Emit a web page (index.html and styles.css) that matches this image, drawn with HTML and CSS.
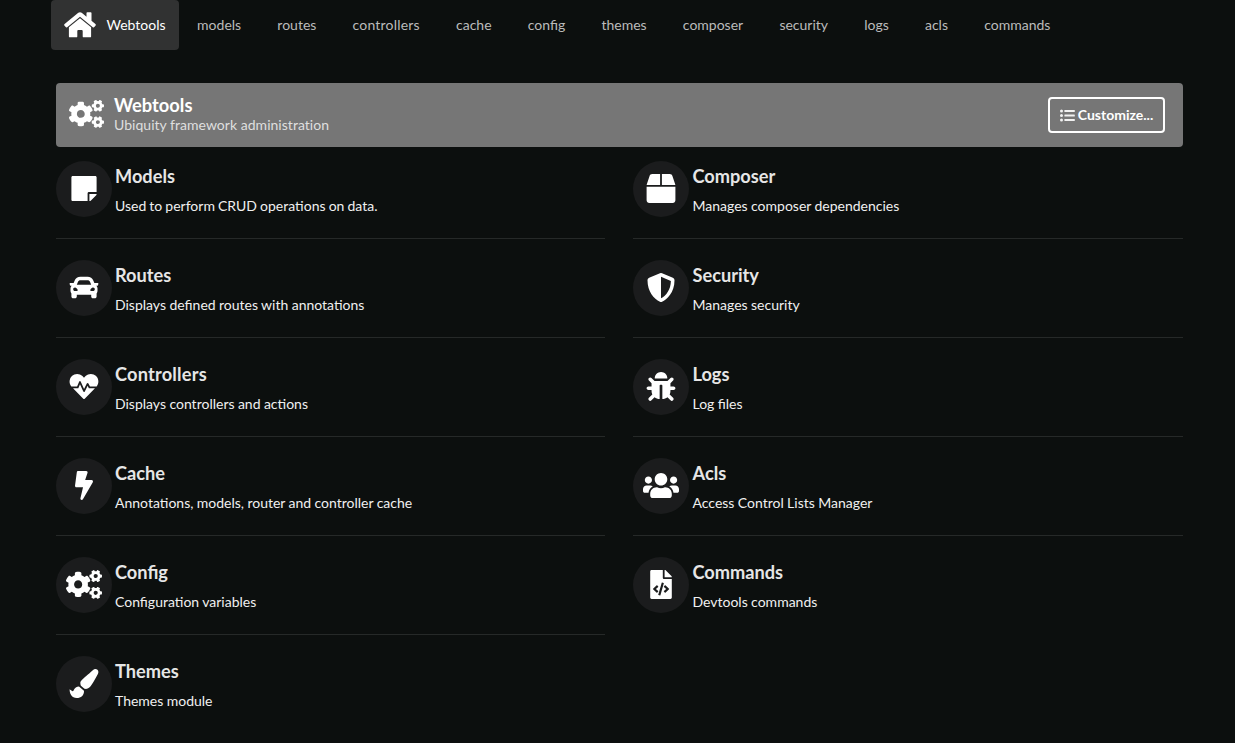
FILE: index.html
```html
<!DOCTYPE html>
<html lang="en">
<head>
<meta charset="utf-8">
<title>Webtools</title>
<link rel="stylesheet" href="styles.css">
</head>
<body>
<svg class="sprite" aria-hidden="true">
  <symbol id="cogs" viewBox="0 0 640 512">
    <path id="cog-small" d="M512.1 191l-8.2 14.3c-3 5.3-9.4 7.5-15.1 5.4-11.8-4.4-22.6-10.7-32.1-18.6-4.6-3.8-5.8-10.5-2.8-15.7l8.2-14.3c-6.9-8-12.3-17.3-15.9-27.4h-16.5c-6 0-11.2-4.3-12.2-10.3-2-12-2.1-24.6 0-37.1 1-6 6.2-10.4 12.2-10.4h16.5c3.6-10.1 9-19.4 15.9-27.4l-8.2-14.3c-3-5.2-1.9-11.9 2.8-15.7 9.5-7.9 20.4-14.2 32.1-18.6 5.7-2.1 12.1.1 15.1 5.4l8.2 14.3c10.5-1.9 21.2-1.9 31.7 0L552 6.3c3-5.3 9.4-7.5 15.1-5.4 11.8 4.4 22.6 10.7 32.1 18.6 4.6 3.8 5.8 10.5 2.8 15.7l-8.2 14.3c6.9 8 12.3 17.3 15.9 27.4h16.5c6 0 11.2 4.3 12.2 10.3 2 12 2.1 24.6 0 37.1-1 6-6.2 10.4-12.2 10.4h-16.5c-3.6 10.1-9 19.4-15.9 27.4l8.2 14.3c3 5.2 1.9 11.9-2.8 15.7-9.5 7.9-20.4 14.2-32.1 18.6-5.7 2.1-12.1-.1-15.1-5.4l-8.2-14.3c-10.4 1.9-21.2 1.9-31.7 0zm-10.5-58.8c38.5 29.6 82.4-14.3 52.8-52.8-38.5-29.7-82.4 14.3-52.8 52.8z"/>
    <use href="#cog-small" y="298.7"/>
    <path d="M386.3 286.1l33.7 16.8c10.1 5.8 14.5 18.1 10.5 29.1-8.9 24.2-26.4 46.4-42.6 65.8-7.4 8.9-20.2 11.1-30.3 5.3l-29.1-16.8c-16 13.7-34.6 24.6-54.9 31.7v33.6c0 11.6-8.3 21.6-19.7 23.6-24.6 4.2-50.4 4.4-75.9 0-11.5-2-20-11.9-20-23.6V418c-20.3-7.2-38.9-18-54.9-31.7L74 403c-10 5.8-22.9 3.6-30.3-5.3-16.2-19.4-33.3-41.6-42.2-65.7-4-10.9.4-23.2 10.5-29.1l33.3-16.8c-3.9-20.9-3.9-42.4 0-63.4L12 205.8c-10.1-5.8-14.6-18.1-10.5-29 8.9-24.2 26-46.4 42.2-65.8 7.4-8.9 20.2-11.1 30.3-5.3l29.1 16.8c16-13.7 34.6-24.6 54.9-31.7V57.1c0-11.5 8.2-21.5 19.6-23.5 24.6-4.2 50.5-4.4 76-.1 11.5 2 20 11.9 20 23.6v33.6c20.3 7.2 38.9 18 54.9 31.7l29.1-16.8c10-5.8 22.9-3.6 30.3 5.3 16.2 19.4 33.2 41.6 42.1 65.8 4 10.9.1 23.2-10 29.1l-33.7 16.8c3.9 21 3.9 42.5 0 63.5zm-117.6 21.1c59.2-77-28.7-164.9-105.7-105.7-59.2 77 28.7 164.9 105.7 105.7z"/>
  </symbol>
</svg>

<nav class="menu">
  <a class="item active">
    <svg class="home" viewBox="0 0 32 26" fill="currentColor"><path d="M16 0.2c-.6 0-1.2.2-1.7.6L.6 12.1c-.6.5-.6 1-.2 1.5l1.3 1.5c.4.5 1 .5 1.5.1L16 4.7l12.8 10.5c.5.4 1.1.4 1.5-.1l1.3-1.5c.4-.5.4-1-.2-1.5L27.5 8.800V1.100c0-.5-.3-.8-.8-.8h-3.400c-.5 0-.8.3-.8.8v3.600L17.700.8c-.5-.4-1.100-.6-1.700-.6z"/><path d="M16 6.200L4.900 15.300v9.100c0 .5.400.9.900.9h6.600c.5 0 .9-.4.9-.9v-5.500c0-.5.400-.9.900-.9h3.600c.5 0 .9.400.9.9v5.500c0 .5.400.9.900.9h6.600c.5 0 .9-.4.900-.9v-9.100z"/></svg>
    <span>Webtools</span>
  </a>
  <a class="item">models</a>
  <a class="item">routes</a>
  <a class="item wide">controllers</a>
  <a class="item">cache</a>
  <a class="item">config</a>
  <a class="item">themes</a>
  <a class="item">composer</a>
  <a class="item">security</a>
  <a class="item">logs</a>
  <a class="item">acls</a>
  <a class="item">commands</a>
</nav>

<main class="page">
  <header class="banner">
    <svg class="icon" viewBox="0 0 640 512"><use href="#cogs"/></svg>
    <div class="banner-text">
      <h1 class="banner-title">Webtools</h1>
      <p class="banner-sub">Ubiquity framework administration</p>
    </div>
    <button class="customize" type="button">
      <svg class="list-icon" viewBox="0 0 15 13" fill="currentColor"><circle cx="1.500" cy="2" r="1.500"/><circle cx="1.500" cy="6.500" r="1.500"/><circle cx="1.500" cy="11" r="1.500"/><rect x="4.400" y="1" width="10.400" height="2" rx=".5"/><rect x="4.400" y="5.500" width="10.400" height="2" rx=".5"/><rect x="4.400" y="10" width="10.400" height="2" rx=".5"/></svg>
      <span>Customize...</span>
    </button>
  </header>

  <div class="columns">
    <section class="list">
      <article class="entry">
        <div class="disc"><svg class="icon" viewBox="-96 0 640 512"><path d="M312 320h136V56c0-13.3-10.7-24-24-24H24C10.7 32 0 42.7 0 56v400c0 13.3 10.7 24 24 24h264V344c0-13.2 10.8-24 24-24zm129 55l-98 98c-4.5 4.5-10.6 7-17 7h-6V352h128v6.100c0 6.300-2.500 12.400-7 16.900z"/></svg></div>
        <div><h2 class="title">Models</h2><p class="desc tight">Used to perform CRUD operations on data.</p></div>
      </article>
      <article class="entry">
        <div class="disc"><svg class="icon" viewBox="-64 0 640 512"><path d="M499.99 176h-59.87l-16.64-41.6C406.38 91.63 365.57 64 319.5 64h-127c-46.06 0-86.88 27.63-103.99 70.4L71.87 176H12.01C4.2 176-1.53 183.34.37 190.91l6 24C7.7 220.25 12.5 224 18.01 224h20.07C24.65 235.73 16 252.78 16 272v48c0 16.12 6.16 30.67 16 41.93V416c0 17.67 14.33 32 32 32h32c17.67 0 32-14.33 32-32v-32h256v32c0 17.67 14.33 32 32 32h32c17.67 0 32-14.33 32-32v-54.07c9.84-11.25 16-25.8 16-41.93v-48c0-19.22-8.65-36.27-22.07-48H494c5.51 0 10.31-3.75 11.64-9.09l6-24c1.89-7.57-3.84-14.91-11.65-14.91zm-352.06-17.83c7.29-18.22 24.94-30.17 44.57-30.17h127c19.63 0 37.28 11.95 44.57 30.17L384 208H128l19.93-49.83zM96 319.8c-19.2 0-32-12.76-32-31.9S76.8 256 96 256s48 28.71 48 47.85-28.8 15.95-48 15.95zm320 0c-19.2 0-48 3.19-48-15.95S396.8 256 416 256s32 12.76 32 31.9-12.8 31.9-32 31.9z"/></svg></div>
        <div><h2 class="title">Routes</h2><p class="desc">Displays defined routes with annotations</p></div>
      </article>
      <article class="entry">
        <div class="disc"><svg class="icon" viewBox="-64 0 640 512"><path d="M320.2 243.8l-49.7 99.4c-6 12.1-23.4 11.7-28.9-.6l-56.9-126.3-30 71.7H60.6l182.5 186.5c7.1 7.3 18.6 7.3 25.7 0L451.4 288H342.3l-22.1-44.2zM473.7 73.9l-2.4-2.5c-51.5-52.6-135.8-52.6-187.4 0L256 100l-27.9-28.5c-51.5-52.7-135.9-52.7-187.4 0l-2.4 2.4C-10.4 123.7-12.5 203 31 256h102.4l35.9-86.2c5.4-12.9 23.6-13.2 29.4-.4l58.2 129.3 49-97.9c5.9-11.8 22.7-11.8 28.6 0l27.6 55.2H481c43.5-53 41.4-132.3-7.3-182.1z"/></svg></div>
        <div><h2 class="title wide">Controllers</h2><p class="desc">Displays controllers and actions</p></div>
      </article>
      <article class="entry">
        <div class="disc"><svg class="icon" viewBox="-160 0 640 512"><path d="M296 160H180.6l42.6-129.8C227.2 15 215.7 0 200 0H56C44 0 33.8 8.9 32.2 20.8l-32 240C-1.7 275.2 9.5 288 24 288h118.7L96.6 482.5c-3.6 15.2 8 29.5 23.3 29.5 8.4 0 16.4-4.4 20.8-12l176-304c9.3-15.9-2.2-36-20.7-36z"/></svg></div>
        <div><h2 class="title">Cache</h2><p class="desc">Annotations, models, router and controller cache</p></div>
      </article>
      <article class="entry">
        <div class="disc"><svg class="icon" viewBox="0 0 640 512"><use href="#cogs"/></svg></div>
        <div><h2 class="title">Config</h2><p class="desc">Configuration variables</p></div>
      </article>
      <article class="entry">
        <div class="disc"><svg class="icon" viewBox="-64 0 640 512"><path d="M167.02 309.34c-40.12 2.58-76.53 17.86-97.19 72.3-2.35 6.21-8 9.98-14.59 9.98-11.11 0-45.46-27.67-55.25-34.35C0 439.62 37.93 512 128 512c75.86 0 128-43.77 128-120.19 0-3.11-.65-6.08-.97-9.13l-88.01-73.34zM457.89 0c-15.16 0-29.37 6.71-40.21 16.45C213.27 199.05 192 203.34 192 257.09c0 13.7 3.25 26.76 8.73 38.7l63.82 53.18c7.21 1.8 14.64 3.03 22.39 3.03 62.11 0 98.11-45.47 211.16-256.46 7.38-14.35 13.9-29.85 13.9-45.99C512 20.64 486 0 457.89 0z"/></svg></div>
        <div><h2 class="title">Themes</h2><p class="desc">Themes module</p></div>
      </article>
    </section>

    <section class="list">
      <article class="entry">
        <div class="disc"><svg class="icon" viewBox="-64 0 640 512"><path d="M509.5 184.6L458.9 32.8C452.4 13.2 434.1 0 413.4 0H272v192h238.7c-.4-2.5-.4-5-1.2-7.4zM240 0H98.6c-20.7 0-39 13.2-45.5 32.8L2.5 184.6c-.8 2.4-.8 4.9-1.2 7.4H240V0zM0 224v240c0 26.5 21.5 48 48 48h416c26.5 0 48-21.5 48-48V224H0z"/></svg></div>
        <div><h2 class="title">Composer</h2><p class="desc">Manages composer dependencies</p></div>
      </article>
      <article class="entry">
        <div class="disc"><svg class="icon" viewBox="-64 0 640 512"><path d="M466.5 83.7l-192-80a48.15 48.15 0 0 0-36.9 0l-192 80C27.7 91.1 16 108.6 16 128c0 198.5 114.5 335.7 221.5 380.3 11.8 4.9 25.1 4.9 36.9 0C360.1 472.6 496 349.3 496 128c0-19.4-11.7-36.9-29.5-44.3zM256.1 446.3l-.1-381 175.9 73.3c-3.3 151.4-82.1 261.1-175.8 307.7z"/></svg></div>
        <div><h2 class="title">Security</h2><p class="desc">Manages security</p></div>
      </article>
      <article class="entry">
        <div class="disc"><svg class="icon" viewBox="-64 0 640 512"><path d="M511.988 288.9c-.478 17.43-15.217 31.1-32.653 31.1H424v16c0 21.864-4.882 42.584-13.6 61.145l60.228 60.228c12.496 12.497 12.496 32.758 0 45.255-12.498 12.497-32.759 12.496-45.256 0l-54.736-54.736C345.886 467.965 314.351 480 280 480V236c0-6.627-5.373-12-12-12h-24c-6.627 0-12 5.373-12 12v244c-34.351 0-65.886-12.035-90.636-32.108l-54.736 54.736c-12.498 12.497-32.759 12.496-45.256 0-12.496-12.497-12.496-32.758 0-45.255l60.228-60.228C92.882 378.584 88 357.864 88 336v-16H32.666C15.23 320 .491 306.33.013 288.9-.484 270.816 14.028 256 32 256h56v-58.745l-46.628-46.628c-12.496-12.497-12.496-32.758 0-45.255 12.498-12.497 32.758-12.497 45.256 0L141.255 160h229.489l54.627-54.627c12.498-12.497 32.758-12.497 45.256 0 12.496 12.497 12.496 32.758 0 45.255L424 197.255V256h56c17.972 0 32.484 14.816 31.988 32.9zM257 0c-61.856 0-112 50.144-112 112h224C369 50.144 318.856 0 257 0z"/></svg></div>
        <div><h2 class="title">Logs</h2><p class="desc">Log files</p></div>
      </article>
      <article class="entry">
        <div class="disc"><svg class="icon" viewBox="0 0 640 512"><path d="M96 224c35.3 0 64-28.7 64-64s-28.7-64-64-64-64 28.7-64 64 28.7 64 64 64zm448 0c35.3 0 64-28.7 64-64s-28.7-64-64-64-64 28.7-64 64 28.7 64 64 64zm32 32h-64c-17.6 0-33.5 7.1-45.1 18.6 40.3 22.1 68.9 62 75.1 109.4h66c17.7 0 32-14.3 32-32v-32c0-35.3-28.7-64-64-64zm-256 0c61.9 0 112-50.1 112-112S381.9 32 320 32 208 82.1 208 144s50.1 112 112 112zm76.8 32h-8.3c-20.8 10-43.9 16-68.5 16s-47.6-6-68.5-16h-8.3C179.6 288 128 339.6 128 403.2V432c0 26.5 21.5 48 48 48h288c26.5 0 48-21.5 48-48v-28.8c0-63.6-51.6-115.2-115.2-115.2zm-223.7-13.4C161.5 263.1 145.6 256 128 256H64c-35.3 0-64 28.7-64 64v32c0 17.7 14.3 32 32 32h65.9c6.3-47.4 34.9-87.3 75.2-109.4z"/></svg></div>
        <div><h2 class="title">Acls</h2><p class="desc">Access Control Lists Manager</p></div>
      </article>
      <article class="entry">
        <div class="disc"><svg class="icon" viewBox="-128 0 640 512"><path d="M384 121.941V128H256V0h6.059c6.365 0 12.47 2.529 16.971 7.029l97.941 97.941A24.005 24.005 0 0 1 384 121.941zM248 160c-13.2 0-24-10.8-24-24V0H24C10.745 0 0 10.745 0 24v464c0 13.255 10.745 24 24 24h336c13.255 0 24-10.745 24-24V160H248zM123.206 400.505a5.4 5.4 0 0 1-7.633.246l-64.866-60.812a5.4 5.4 0 0 1 0-7.879l64.866-60.812a5.4 5.4 0 0 1 7.633.246l19.579 20.885a5.4 5.4 0 0 1-.372 7.747L101.65 336l40.763 35.874a5.4 5.4 0 0 1 .372 7.747l-19.579 20.884zm51.295 50.479l-27.453-7.97a5.402 5.402 0 0 1-3.681-6.692l61.44-211.626a5.402 5.402 0 0 1 6.692-3.681l27.452 7.97a5.4 5.4 0 0 1 3.68 6.692l-61.44 211.626a5.397 5.397 0 0 1-6.69 3.681zm160.792-111.045l-64.866 60.812a5.4 5.4 0 0 1-7.633-.246l-19.58-20.885a5.4 5.4 0 0 1 .372-7.747L284.35 336l-40.763-35.874a5.4 5.4 0 0 1-.372-7.747l19.58-20.885a5.4 5.4 0 0 1 7.633-.246l64.866 60.812a5.4 5.4 0 0 1-.001 7.879z"/></svg></div>
        <div><h2 class="title">Commands</h2><p class="desc">Devtools commands</p></div>
      </article>
    </section>
  </div>
</main>
</body>
</html>
```
FILE: styles.css
```css
* { box-sizing: border-box; }

body {
  margin: 0;
  height: 743px;
  overflow: hidden;
  background: #0c0f0e;
  color: #fff;
  font: 14px/20px Lato, "Liberation Sans", sans-serif;
}

h1, h2, p { margin: 0; }

.sprite { display: none; }

.menu {
  display: flex;
  height: 50px;
  padding-left: 51px;
}

.item {
  display: flex;
  align-items: center;
  padding: 0 18.1px;
  color: #bbb;
}

.item.wide { letter-spacing: .2px; }

.item.active {
  width: 128px;
  padding: 0 0 0 13px;
  gap: 10.5px;
  border-radius: 4px;
  background: #313232;
  color: #fff;
}

.home { width: 32px; height: 26px; margin-bottom: 1px; }

.page { margin: 33px 52px 0 56px; }

.banner {
  display: flex;
  align-items: center;
  height: 64px;
  padding: 0 18px 0 13px;
  border-radius: 4px;
  background: #767676;
}

.icon {
  width: 36px;
  height: 29px;
  margin-bottom: 1px;
  fill: #fff;
  flex: none;
}

.banner .icon { width: 35px; height: 28px; margin-bottom: 2px; }

.banner-text { flex: 1; padding-left: 10px; }

.banner-title {
  font-size: 18.300px;
  line-height: 20px;
  font-weight: 700;
}

.banner-sub { color: #dfdfdf; letter-spacing: .03px; }

.customize {
  display: flex;
  align-items: center;
  justify-content: center;
  gap: 3px;
  width: 117px;
  height: 36px;
  padding: 0;
  border: 2px solid #fff;
  border-radius: 4px;
  background: none;
  color: #fff;
  font: 700 14px/14px Lato, "Liberation Sans", sans-serif;
}

.list-icon { width: 15px; height: 13px; opacity: .9; }

.columns {
  display: grid;
  grid-template-columns: 549px 550px;
  gap: 28px;
  padding-top: 14px;
  align-items: start;
}

.entry {
  display: flex;
  gap: 3px;
  height: 78px;
  border-bottom: 1px solid #262928;
  margin-bottom: 21px;
}

.list + .list .entry { gap: 3.500px; }

.entry:last-child { border-bottom: 0; }

.disc {
  display: flex;
  align-items: center;
  justify-content: center;
  width: 56px;
  height: 56px;
  border-radius: 50%;
  background: #1b1c1d;
}

.title {
  padding-top: 4px;
  font-size: 18.200px;
  line-height: 23px;
  font-weight: 700;
  color: #e6e6e6;
}

.title.wide { letter-spacing: .2px; }

.desc { padding-top: 8px; color: #f0f0f0; word-spacing: -.2px; }

.desc.tight { word-spacing: -.5px; }
```
